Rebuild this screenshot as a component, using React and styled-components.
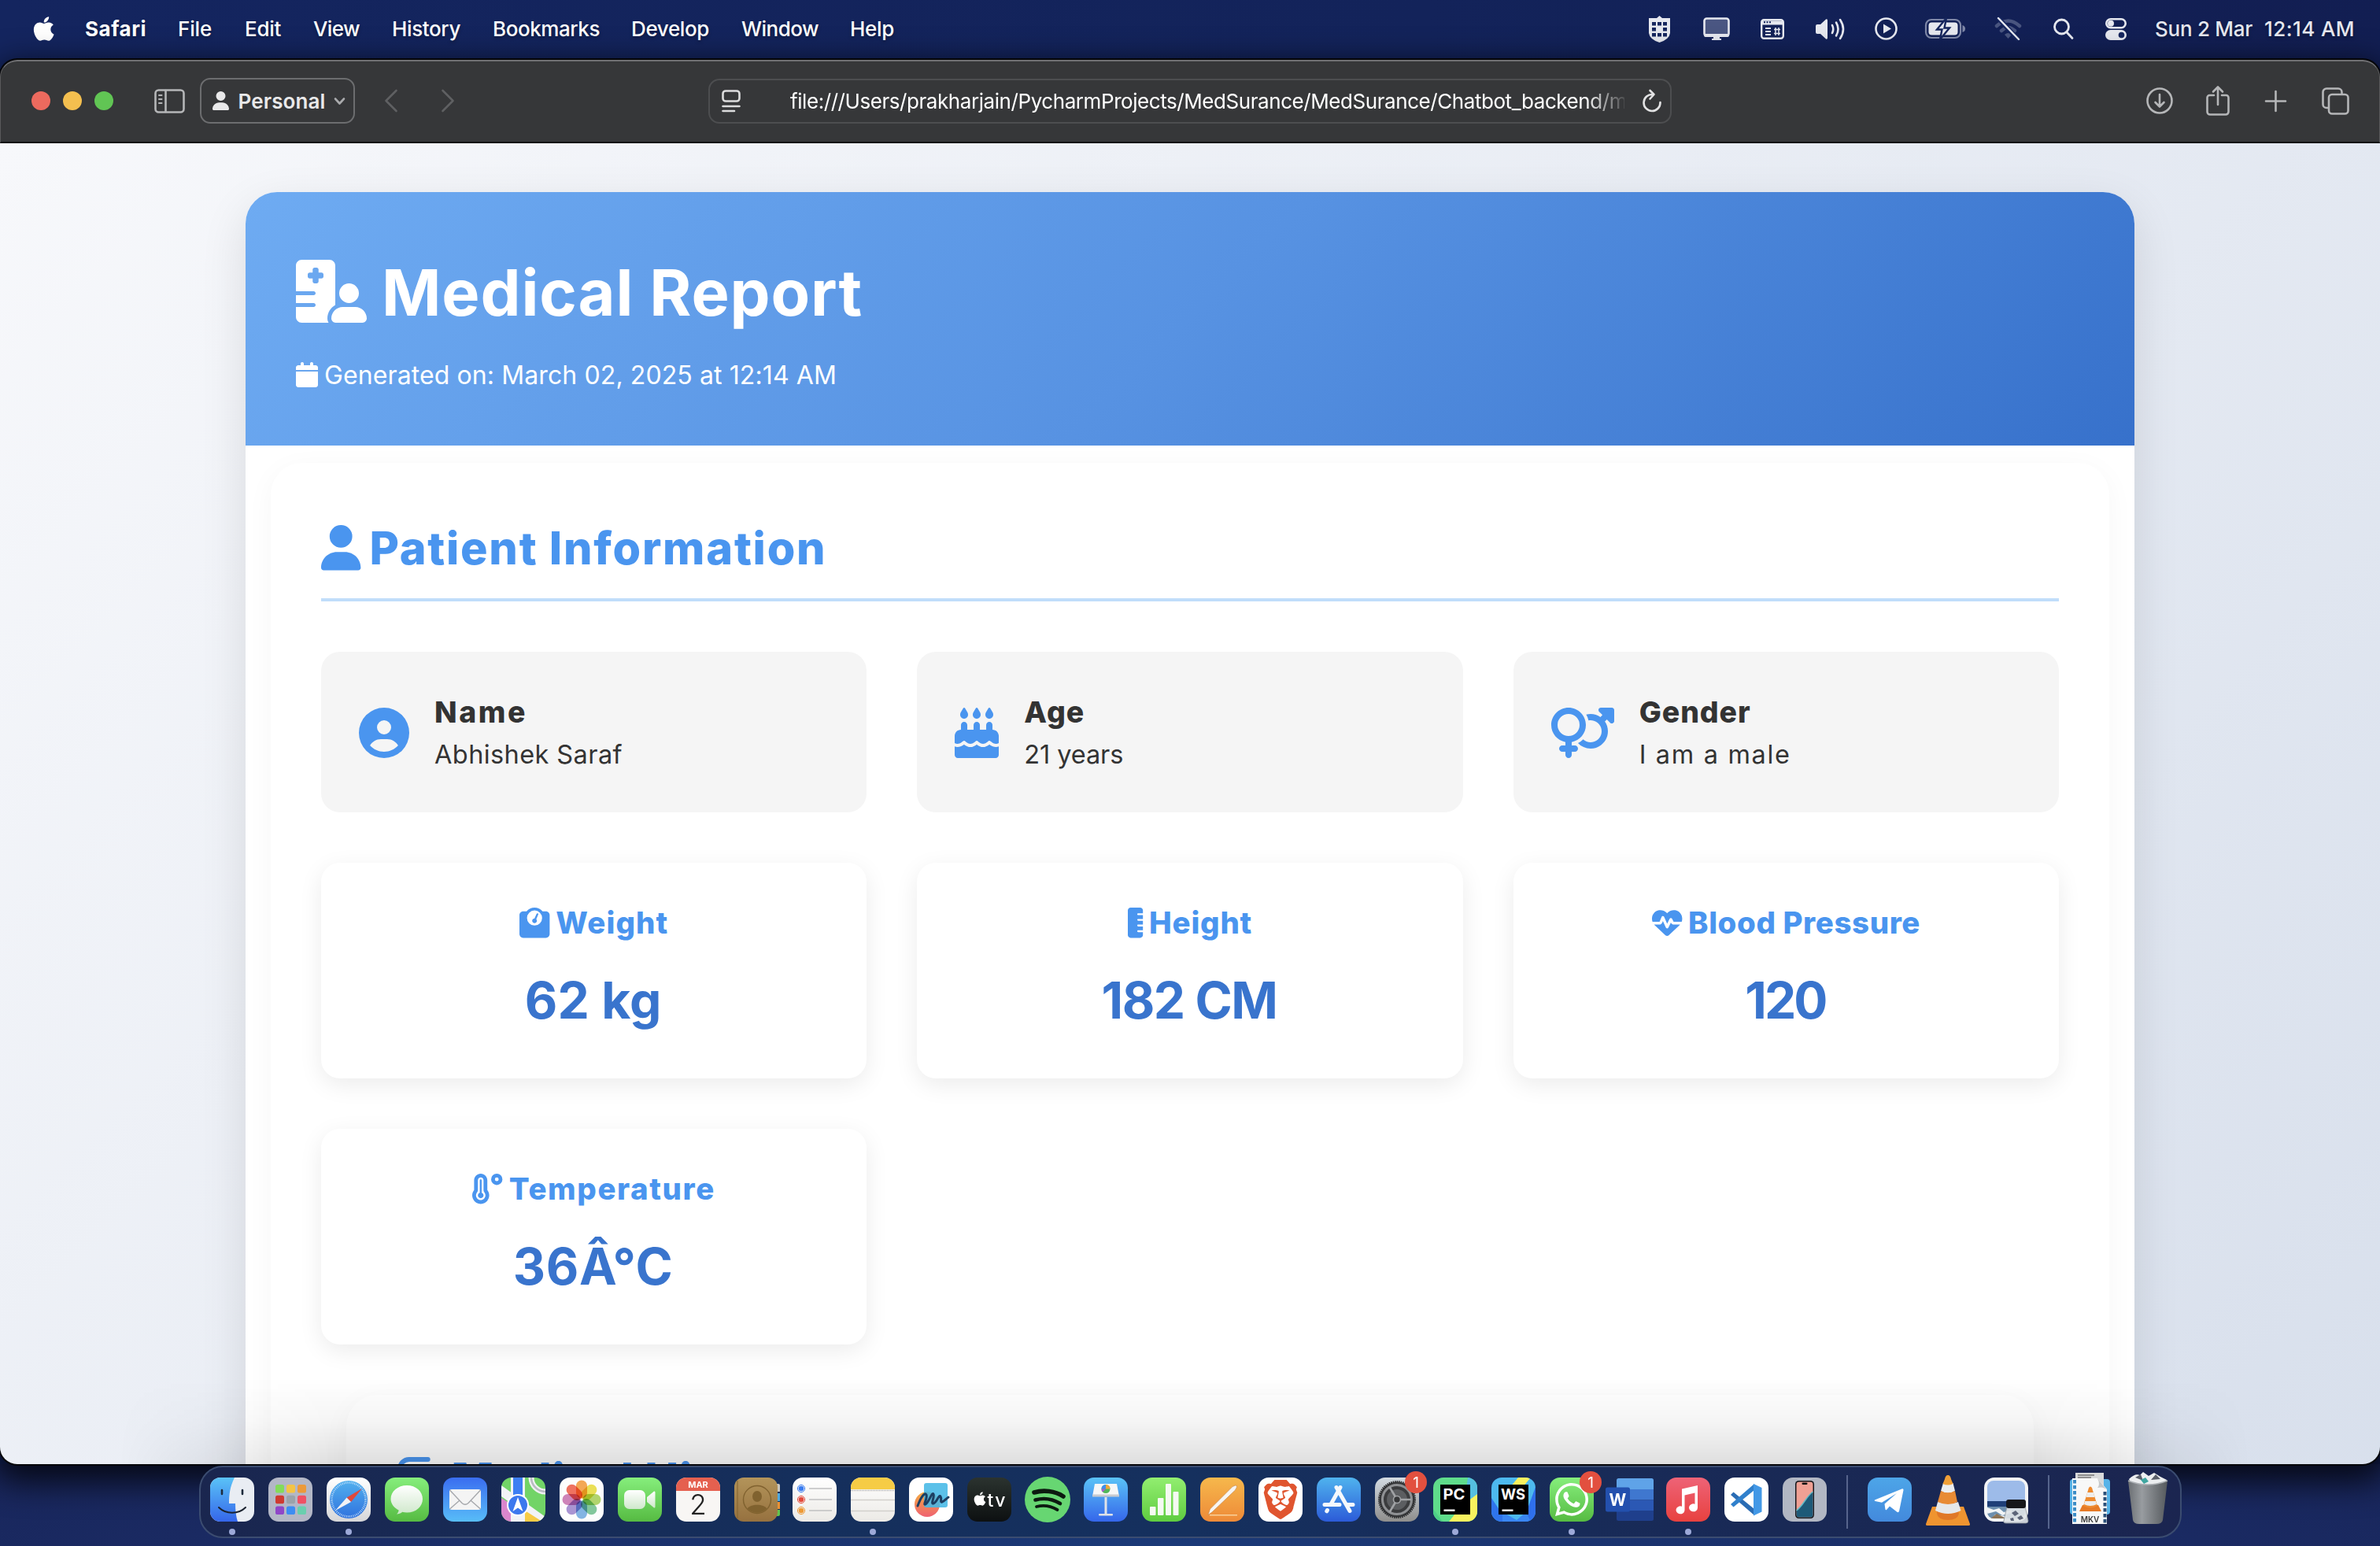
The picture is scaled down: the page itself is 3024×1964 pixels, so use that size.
import React, { useLayoutEffect, useRef, useState } from "react";
import styled, { createGlobalStyle } from "styled-components";
import {
  FaApple, FaHospitalUser, FaCalendar, FaUser, FaCircleUser, FaCakeCandles, FaVenusMars,
  FaWeightScale, FaRulerVertical, FaHeartPulse, FaTemperatureHigh, FaWhatsapp,
} from "react-icons/fa6";
import { SiBrave } from "react-icons/si";

const Global = createGlobalStyle`
  * { box-sizing: border-box; }
  html, body { margin: 0; padding: 0; overflow: hidden; background: #14245c; }
  body { font-family: Inter, "Liberation Sans", sans-serif; }
  svg { display: block; flex: none; overflow: visible; }
`;

/* ---------- text with tracking adjusted to a given measure ---------- */
const TrackedSpan = styled.span`
  display: inline-block;
  white-space: pre;
  flex: none;
`;
function Tracked({ width, children }) {
  const ref = useRef(null);
  const [spacing, setSpacing] = useState(0);
  useLayoutEffect(() => {
    const natural = ref.current.getBoundingClientRect().width;
    setSpacing((width - natural) / children.length);
  }, []);
  return <TrackedSpan ref={ref} style={{ letterSpacing: `${spacing}px` }}>{children}</TrackedSpan>;
}

/* ---------- desktop ---------- */
const Desktop = styled.div`
  width: 3024px;
  height: 1964px;
  display: flex;
  flex-direction: column;
  overflow: hidden;
  background: linear-gradient(90deg, #14255f, #13235a 60%, #121e52);
`;
const MenuBar = styled.header`
  height: 76px;
  flex: none;
  display: flex;
  justify-content: space-between;
  padding: 0 32px 3px 41px;
  color: #fff;
  font-size: 26px;
  font-weight: 500;
  text-shadow: 0 2px 4px rgba(0, 0, 0, 0.35);
`;
const MenuList = styled.nav`
  display: flex;
  align-items: center;
`;
const MenuItem = styled.div`
  width: ${(p) => p.$slot}px;
  font-weight: ${(p) => (p.$strong ? 700 : 500)};
`;
const StatusList = styled.div`
  display: flex;
  align-items: center;
  color: #e6e8ef;
`;
const StatusIcon = styled.svg`
  width: ${(p) => p.$w}px;
  height: ${(p) => p.$h}px;
  margin-right: ${(p) => p.$gap}px;
`;
const Clock = styled.div`
  display: flex;
  gap: 15px;
`;

/* ---------- browser window ---------- */
const Window = styled.main`
  height: 1784px;
  flex: none;
  display: flex;
  flex-direction: column;
  border-radius: 22px;
  overflow: hidden;
  background: #363739;
  box-shadow: 0 0 0 2px #05060a, 0 14px 40px 8px rgba(0, 0, 0, 0.75);
  position: relative;
  z-index: 1;
`;
const Toolbar = styled.div`
  height: 106px;
  flex: none;
  display: flex;
  align-items: center;
  padding: 0 38px 2px 39px;
  border-top: 2px solid #707073;
  border-bottom: 2px solid #0c0c0d;
  border-left: 1px solid #59595b;
  border-right: 1px solid #59595b;
  border-radius: 22px 22px 0 0;
  color: #b5b6b8;
`;
const Lights = styled.div`
  display: flex;
  gap: 16px;
  margin-right: 52px;
`;
const Light = styled.i`
  width: 24px;
  height: 24px;
  border-radius: 50%;
  background: ${(p) => p.$tone};
`;
const ToolIcon = styled.svg`
  width: ${(p) => p.$w}px;
  height: ${(p) => p.$h}px;
  margin-right: ${(p) => p.$gap || 0}px;
  fill: none;
  stroke: ${(p) => p.$tone || "currentColor"};
  stroke-width: 2.6;
  stroke-linecap: round;
  stroke-linejoin: round;
`;
const ProfileButton = styled.button`
  width: 197px;
  height: 58px;
  margin-right: 38px;
  padding: 0 11px 0 14px;
  display: flex;
  align-items: center;
  justify-content: space-between;
  border: 2px solid #6c6d6f;
  border-radius: 13px;
  background: transparent;
  color: #e9e9ea;
  font: 600 26px Inter, sans-serif;
`;
const AddressBar = styled.div`
  width: 1224px;
  height: 57px;
  margin-left: 323px;
  padding: 0 10px 0 15px;
  display: flex;
  align-items: center;
  border: 2px solid #4d4e50;
  border-radius: 14px;
  color: #fff;
`;
const Address = styled.div`
  width: 1060px;
  margin: 0 23px 0 63px;
  overflow: hidden;
  font-size: 26px;
  white-space: nowrap;
  mask-image: linear-gradient(90deg, #000 1010px, transparent 1066px);
`;
const ToolGroup = styled.div`
  display: flex;
  align-items: center;
  margin-left: auto;
`;

/* ---------- report page ---------- */
const Page = styled.div`
  flex: 1;
  min-height: 0;
  padding: 62px 312px 0;
  overflow: hidden;
  background: linear-gradient(135deg, #f7f8fb, #c3cfe2) 0 0 / 3024px 4900px no-repeat;
`;
const Report = styled.article`
  height: 2600px;
  border-radius: 40px;
  background: #fff;
  box-shadow: 0 20px 60px rgba(0, 0, 0, 0.11);
`;
const ReportHeader = styled.header`
  height: 322px;
  padding: 64px 64px 0;
  border-radius: 40px 40px 0 0;
  background: linear-gradient(135deg, #6eabf2, #5792e2 50%, #3771cb);
  color: #fff;
`;
const Title = styled.h1`
  height: 124px;
  margin: 0 0 20px;
  display: flex;
  align-items: center;
  gap: 19px;
  font-size: 81px;
  font-weight: 700;
`;
const TitleText = styled.span`
  padding-top: 3px;
`;
const Generated = styled.p`
  height: 48px;
  margin: 0;
  display: flex;
  align-items: center;
  gap: 8px;
  font-size: 32px;
`;
const Glyph = styled.span`
  flex: none;
  display: block;
  height: 1em;
  width: ${(p) => p.$ratio}em;
  font-size: ${(p) => (p.$size ? `${p.$size}px` : "inherit")};
  color: ${(p) => p.$tone || "inherit"};
  svg { width: 100%; height: 100%; }
`;
const Section = styled.section`
  height: 2200px;
  margin: ${(p) => p.$top}px 32px 0;
  padding: 64px;
  border-radius: 40px;
  background: #fff;
  box-shadow: 0 8px 36px rgba(0, 0, 0, 0.04);
`;
const SectionTitle = styled.h2`
  height: 112px;
  margin: 0 0 64px;
  padding-bottom: 20px;
  display: flex;
  align-items: center;
  gap: ${(p) => p.$gap}px;
  border-bottom: 4px solid #c0ddfa;
  color: #4a95ef;
  font-size: 57.6px;
  font-weight: 800;
`;
const SectionName = styled.span`
  padding-bottom: ${(p) => p.$lift || 0}px;
`;
const CardGrid = styled.div`
  display: grid;
  grid-template-columns: repeat(3, 1fr);
  gap: 64px;
`;
const InfoCard = styled.div`
  height: 204px;
  padding: 1px 48px 0;
  display: flex;
  align-items: center;
  gap: 32px;
  border-radius: 24px;
  background: #f5f5f5;
  color: #333;
`;
const InfoLabel = styled.h3`
  margin: 0;
  font-size: 37.4px;
  font-weight: 800;
  line-height: 56px;
`;
const InfoValue = styled.p`
  margin: 0;
  font-size: 32.5px;
  line-height: 52px;
`;
const StatCard = styled.div`
  height: 274px;
  padding-top: 48px;
  border-radius: 24px;
  background: #fff;
  box-shadow: 0 8px 30px rgba(0, 0, 0, 0.08);
`;
const StatLabel = styled.h3`
  height: 56px;
  margin: 0 0 23px;
  display: flex;
  align-items: center;
  justify-content: center;
  gap: 8px;
  color: #4a95ef;
  font-size: 38.4px;
  font-weight: 800;
`;
const StatValue = styled.p`
  margin: 0;
  padding-right: 2px;
  text-align: center;
  color: #3974cd;
  font-size: 64px;
  font-weight: 650;
  line-height: 96px;
`;
const BottomShade = styled.div`
  position: absolute;
  left: 0;
  right: 0;
  bottom: 0;
  height: 110px;
  background: linear-gradient(rgba(0, 0, 0, 0), rgba(0, 0, 0, 0.04) 50%, rgba(0, 0, 0, 0.125));
  mask-image: linear-gradient(90deg, transparent 150px, #000 420px, #000 2600px, transparent 2860px);
`;

/* ---------- dock ---------- */
const DockArea = styled.footer`
  flex: 1;
  display: flex;
  justify-content: center;
  align-items: flex-start;
  background: radial-gradient(ellipse at 50% 100%, #1b3a78, #1a2a62 60%, #182458);
`;
const DockBar = styled.div`
  height: 92px;
  margin-top: 2px;
  padding: 0 11px 0 12px;
  display: flex;
  align-items: flex-start;
  gap: 18px;
  border: 2px solid #3b4c70;
  border-radius: 30px;
  background: linear-gradient(90deg, #1a264f, #152f5c 30%, #15305e 50%, #182b58 70%, #1b2550);
  position: relative;
  z-index: 2;
`;
const DockItem = styled.div`
  width: 56px;
  padding-top: 13px;
  display: flex;
  flex-direction: column;
  align-items: center;
  gap: 9px;
  svg { width: 56px; height: 56px; }
`;
const Running = styled.i`
  width: 8px;
  height: 8px;
  border-radius: 50%;
  background: #9da9d8;
`;
const DockDivider = styled.i`
  width: 2px;
  height: 68px;
  margin: 10px 7px 0;
  background: #56648c;
`;

const Tile = ({ fill }) => <rect width="56" height="56" rx="13" fill={fill} />;
const Grad = ({ id, from, to, mid }) => (
  <linearGradient id={id} x1="0" y1="0" x2="0" y2="1">
    <stop offset="0" stopColor={from} />
    {mid && <stop offset="0.5" stopColor={mid} />}
    <stop offset="1" stopColor={to} />
  </linearGradient>
);
const Badge = () => (
  <g>
    <circle cx="52" cy="6" r="14" fill="#e2503f" />
    <text x="52" y="13" fontSize="19" textAnchor="middle" fill="#fff">1</text>
  </g>
);

const art = {
  finder: (
    <>
      <clipPath id="cf"><rect width="56" height="56" rx="13" /></clipPath>
      <g clipPath="url(#cf)">
        <rect width="56" height="56" fill="#e9edf3" />
        <path d="M0 0H31C25 12 24 22 24 33H32C32 42 33 50 35 56H0Z" fill="url(#gBlueDown)" />
      </g>
      <path d="M15 16v5M41 16v5" stroke="#1d2b3d" strokeWidth="2.6" strokeLinecap="round" />
      <path d="M11 38C20 47 36 47 45 38" stroke="#1b2330" strokeWidth="2" fill="none" strokeLinecap="round" />
    </>
  ),
  launchpad: (
    <>
      <Tile fill="#b3b7c6" />
      {["#83dc5a", "#f4c445", "#ec9a3a", "#cf3a30", "#9ba3aa", "#f05164", "#8f46c8", "#3d8df2", "#69cfae"].map((c, i) => (
        <rect key={c} x={9 + (i % 3) * 14} y={9 + Math.floor(i / 3) * 13.8} width="11" height="10.5" rx="2.6" fill={c} />
      ))}
    </>
  ),
  safari: (
    <>
      <Tile fill="url(#gPaper)" />
      <circle cx="28" cy="28" r="24" fill="url(#gSafari)" />
      <circle cx="28" cy="28" r="21.5" fill="none" stroke="#cfe6fb" strokeWidth="2.6" strokeDasharray="0.8 1.45" />
      <path d="M45 14L31 31L25.500 25.500Z" fill="#e0483b" />
      <path d="M11 42L25.500 25.500L31 31Z" fill="#f1f3f5" />
    </>
  ),
  messages: (
    <>
      <Tile fill="url(#gGreen)" />
      <path d="M28 10c11.500 0 20 7.500 20 17.200S39.500 44.500 28 44.500c-2 0-4-.2-5.800-.7-2 1.800-4.600 2.700-7.200 2.700 1.500-1.200 2.500-3 2.600-5C11.500 38.300 7.500 33.300 7.500 27.200 7.500 17.500 16.500 10 28 10Z" fill="url(#gBubble)" />
    </>
  ),
  mail: (
    <>
      <Tile fill="url(#gMail)" />
      <rect x="8" y="15" width="40" height="26" rx="3" fill="#f4f4f4" />
      <path d="M8.500 16L24 32.500q4 3.500 8 0L47.500 16M8.500 40L21 29M47.500 40L35 29" fill="none" stroke="#a4a6aa" strokeWidth="1.300" />
    </>
  ),
  maps: (
    <>
      <clipPath id="cm"><rect width="56" height="56" rx="13" /></clipPath>
      <g clipPath="url(#cm)">
        <rect width="56" height="56" fill="#72d467" />
        <path d="M0 26L14 35V56H0Z" fill="#d986cd" />
        <path d="M0 10L56 50V64L0 24Z" fill="#f2f3f6" />
        <path d="M30 42L52 56H30Z" fill="#f7cb45" />
        <path d="M38 0A18 18 0 0 0 56 18" stroke="#f0f0f2" strokeWidth="7" fill="none" />
        <path d="M38 0A18 18 0 0 0 56 18" stroke="#b8bbc2" strokeWidth="2.500" fill="none" />
        <rect x="12" width="18" height="56" fill="#f2f3f6" />
        <rect x="15" width="12" height="34" fill="#3d7ff3" />
      </g>
      <circle cx="21" cy="35" r="14" fill="#fff" />
      <circle cx="21" cy="35" r="12" fill="#3c78ee" />
      <path d="M21 25L27.500 43L21 38.500L14.500 43Z" fill="#fff" />
    </>
  ),
  photos: (
    <>
      <Tile fill="#fdfdfd" />
      {["#f39a37", "#e9dc3a", "#a6cf55", "#6fbf8c", "#6ea9e0", "#9b82cd", "#c76fae", "#ee5a45"].map((c, i) => (
        <rect key={c} x="21" y="3.500" width="14" height="23" rx="7" fill={c} fillOpacity="0.85" transform={`rotate(${i * 45} 28 28)`} style={{ mixBlendMode: "multiply" }} />
      ))}
    </>
  ),
  facetime: (
    <>
      <Tile fill="url(#gGreen)" />
      <rect x="8" y="16" width="27" height="24" rx="6.500" fill="url(#gBubble)" />
      <path d="M37 25L46 17.500Q47.500 17 47.500 19V37Q47.500 39 46 38.500L37 31Z" fill="url(#gBubble)" />
    </>
  ),
  calendar: (
    <>
      <Tile fill="#f8f6f4" />
      <path d="M13 0H43A13 13 0 0 1 56 13V17H0V13A13 13 0 0 1 13 0Z" fill="#e5604f" />
      <text x="28" y="13" fontSize="11" fontWeight="700" textAnchor="middle" fill="#fff">MAR</text>
      <text x="28" y="47" fontSize="35" fontWeight="300" textAnchor="middle" fill="#222">2</text>
    </>
  ),
  contacts: (
    <>
      <path d="M50 8h6a2 2 0 0 1 2 2v8h-8Z" fill="#c9c6bf" />
      <path d="M50 20h8v10h-8Z" fill="#4fa9df" />
      <path d="M50 31h8v9h-8Z" fill="#ea9133" />
      <path d="M50 41h8v6a2 2 0 0 1-2 2h-6Z" fill="#62c44e" />
      <rect width="55" height="56" rx="12" fill="url(#gBrown)" />
      <path d="M4 4V52" stroke="#82622f" strokeWidth="1" />
      <circle cx="29" cy="28" r="17.500" fill="none" stroke="#80622f" strokeWidth="1.400" />
      <ellipse cx="29" cy="24" rx="6" ry="7" fill="#80622f" />
      <path d="M16.500 39.500C20 33 38 33 41.500 39.500A17.500 17.500 0 0 1 16.500 39.500Z" fill="#80622f" />
    </>
  ),
  reminders: (
    <>
      <Tile fill="url(#gPaperLight)" />
      {["#3b7df0", "#e34b3d", "#ee9a36"].map((c, i) => (
        <g key={c}>
          <circle cx="11" cy={14 + i * 14} r="4.600" fill="none" stroke={c} strokeWidth="1" />
          <circle cx="11" cy={14 + i * 14} r="3.300" fill={c} />
          <path d={`M21 ${14 + i * 14}H50`} stroke="#c3c3c3" strokeWidth="1.600" />
        </g>
      ))}
    </>
  ),
  notes: (
    <>
      <Tile fill="url(#gPaperLight)" />
      <path d="M13 0H43A13 13 0 0 1 56 13V15H0V13A13 13 0 0 1 13 0Z" fill="#f6cc45" />
      <path d="M0 16.500H56" stroke="#aaa7a0" strokeWidth="1.500" strokeDasharray="1 1" />
      <path d="M0 28.500H56M0 42.500H56" stroke="#d2d0cc" strokeWidth="1.300" />
    </>
  ),
  freeform: (
    <>
      <Tile fill="#fff" />
      <circle cx="23" cy="34" r="16" fill="url(#gPeach)" />
      <rect x="19" y="7" width="30" height="31" rx="3" fill="#45b8e6" fillOpacity="0.88" />
      <path d="M11 36C15 25 20 18 22 22S17 36 21 34 29 18 31 21 27 34 31 33 38 21 40 24 39 32 42 31 47 27 50 25" stroke="#1d3f63" strokeWidth="3" fill="none" strokeLinecap="round" />
    </>
  ),
  tv: (
    <>
      <Tile fill="url(#gInk)" />
      <FaApple x="7" y="17" width="18" height="20" style={{ width: 18, height: 20 }} color="#fff" />
      <text x="25.500" y="37" fontSize="23" fontWeight="500" fill="#fff" textLength="23">tv</text>
    </>
  ),
  spotify: (
    <>
      <circle cx="28" cy="28" r="29" fill="#67d672" />
      <g stroke="#0c1a10" fill="none" strokeLinecap="round">
        <path d="M11 19C23 15.500 37 17 48 24" strokeWidth="5.600" />
        <path d="M12.500 28.500C23 25.500 34 27 44 33" strokeWidth="4.600" />
        <path d="M14 37C23 34.500 32 36 40.500 41" strokeWidth="3.800" />
      </g>
    </>
  ),
  keynote: (
    <>
      <Tile fill="url(#gBlueDown)" />
      <path d="M14 8H42L45 24H11Z" fill="#f6f7f8" />
      <path d="M11 21.500H45V24.500H11Z" fill="#c6cad0" />
      <rect x="26.500" y="25" width="3" height="22" fill="#e0e3e8" />
      <rect x="19" y="46" width="18" height="2.600" rx="1" fill="#dfe2e6" />
      <circle cx="28" cy="14.500" r="5.500" fill="#51b85a" />
      <path d="M28 14.500V9A5.500 5.500 0 0 1 33.500 14.500Z" fill="#f0a53a" />
      <path d="M28 14.500H22.500A5.500 5.500 0 0 1 28 9Z" fill="#3e8ff0" />
      <path d="M28 14.500L24 18.500A5.500 5.500 0 0 1 22.500 14.500Z" fill="#a95bd0" />
    </>
  ),
  numbers: (
    <>
      <Tile fill="url(#gLime)" />
      <g fill="#f5faf2">
        <rect x="10" y="37" width="7.500" height="11" rx="1" />
        <rect x="20" y="26" width="7.500" height="22" rx="1" />
        <rect x="30" y="8" width="7" height="40" rx="1" />
        <rect x="39.500" y="18" width="7" height="30" rx="1" />
      </g>
    </>
  ),
  pages: (
    <>
      <Tile fill="url(#gOrange)" />
      <path d="M10 47.500L12.500 40L41 11.500Q45 9 46.500 10.500 47 12 44.500 16L15 44Z" fill="#f7f5f2" stroke="#c98a4b" strokeWidth="0.700" />
      <path d="M12 47.800H47" stroke="#f9d09a" strokeWidth="1.400" />
    </>
  ),
  brave: (
    <>
      <Tile fill="#fff" />
      <SiBrave x="3" y="2" style={{ width: 50, height: 52 }} color="#e0552f" />
    </>
  ),
  appstore: (
    <>
      <Tile fill="url(#gStore)" />
      <g stroke="#f5f8fc" strokeWidth="5" strokeLinecap="round" fill="none">
        <path d="M30 12.500L18 34M13.500 41.500L12.800 42.800M25 12.500L42 42.500M10 34.500H29M38.500 34.500H46" />
      </g>
    </>
  ),
  settings: (
    <>
      <Tile fill="url(#gSteel)" />
      <circle cx="28" cy="28" r="22.500" fill="#3b3c3e" stroke="#2b2c2e" strokeWidth="3" strokeDasharray="1.500 1" />
      <circle cx="28" cy="28" r="18.500" fill="none" stroke="#8f9194" strokeWidth="3" />
      <circle cx="28" cy="28" r="13" fill="#5c5e61" />
      <circle cx="28" cy="28" r="4.500" fill="#37383a" stroke="#a0a2a5" strokeWidth="1.600" />
      <path d="M32 28H46M26 24.500L18.500 12M26 31.500L18.500 44" stroke="#a0a2a5" strokeWidth="2.600" />
      <Badge />
    </>
  ),
  pycharm: (
    <>
      <clipPath id="cp"><rect width="56" height="56" rx="13" /></clipPath>
      <g clipPath="url(#cp)">
        <rect width="56" height="56" fill="#5fdc8b" />
        <path d="M44 0H56V25L40 30Z" fill="#55bfe0" />
        <path d="M56 21L36 36L20 56H56Z" fill="#f8f25e" />
        <path d="M0 40L12 56H0Z" fill="#4dcf87" />
      </g>
      <rect x="9" y="9" width="38" height="38" />
      <text x="12.500" y="28" fontSize="19" fontWeight="700" fill="#fff" textLength="28" lengthAdjust="spacingAndGlyphs">PC</text>
      <rect x="13.500" y="40.500" width="14" height="2.400" fill="#fff" />
    </>
  ),
  webstorm: (
    <>
      <clipPath id="cw"><rect width="56" height="56" rx="13" /></clipPath>
      <g clipPath="url(#cw)">
        <rect width="56" height="56" fill="#4db9ef" />
        <path d="M34 0H50L38 14L24 12Z" fill="#f8f25e" />
        <path d="M56 12L40 56H56Z" fill="#2f6fec" />
        <path d="M0 26L20 56H0Z" fill="#2f74ec" />
        <path d="M14 44L32 54L44 44L50 56H14Z" fill="#3a86f2" />
      </g>
      <rect x="9" y="9" width="38" height="38" />
      <text x="12" y="28" fontSize="19" fontWeight="700" fill="#fff" textLength="31" lengthAdjust="spacingAndGlyphs">WS</text>
      <rect x="13.500" y="40.500" width="14" height="2.400" fill="#fff" />
    </>
  ),
  whatsapp: (
    <>
      <Tile fill="url(#gGreen)" />
      <FaWhatsapp x="4" y="4" style={{ width: 48, height: 48 }} color="#fff" />
      <Badge />
    </>
  ),
  word: (
    <>
      <clipPath id="cwd"><rect x="11" y="1" width="47" height="54" rx="2.500" /></clipPath>
      <g clipPath="url(#cwd)">
        <rect x="11" y="1" width="47" height="14" fill="#5fa3e8" />
        <rect x="11" y="15" width="47" height="13.500" fill="#3f77cf" />
        <rect x="11" y="28.500" width="47" height="13.500" fill="#2b58b4" />
        <rect x="11" y="42" width="47" height="14" fill="#1f3f8c" />
      </g>
      <rect x="-3" y="12.500" width="31" height="31" rx="2.500" fill="#2350ae" />
      <text x="12.500" y="35.500" fontSize="21" fontWeight="700" textAnchor="middle" fill="#fff">W</text>
    </>
  ),
  music: (
    <>
      <Tile fill="url(#gRed)" />
      <path d="M20 14.500L40 10V38.500a5.500 5 0 1 1-3.500-4.800V19.500L23.500 22.500V41.500a5.500 5 0 1 1-3.500-4.800Z" fill="#fff" />
    </>
  ),
  vscode: (
    <>
      <Tile fill="#fff" />
      <path d="M8 22L11.500 18.500L38 40V48Z" fill="#2a6cb4" />
      <path d="M8 34L11.500 37.500L38 16V8Z" fill="#3080cc" />
      <path d="M37 8L47.500 13V43.500L37 48.500Z" fill="#4298e6" />
    </>
  ),
  iphone: (
    <>
      <Tile fill="#b2b7c3" />
      <rect x="16" y="4" width="24" height="48" rx="4.500" fill="#15171c" />
      <rect x="17.500" y="5.500" width="21" height="45" rx="3.400" fill="#f0a094" />
      <path d="M38.500 18C30 24 26 36 17.500 42V47a3.400 3.400 0 0 0 3.400 3.500H35a3.400 3.400 0 0 0 3.500-3.500Z" fill="#1e5a78" />
      <path d="M38.500 18C30 24 26 36 17.500 42" stroke="#63bcc8" strokeWidth="1.500" fill="none" />
      <rect x="24.500" y="6.500" width="7" height="2.600" rx="1.300" fill="#111" />
    </>
  ),
  telegram: (
    <>
      <Tile fill="url(#gTele)" />
      <path d="M9 28.500L44 14.200Q45.800 14 45.500 16L40 43Q39 45 37 43.500L28 36.500L24 41Q22.500 42 22.300 39.500L21.500 33.500L37 20L18 31.800L9.500 30Q8 29.200 9 28.500Z" fill="#fff" />
    </>
  ),
  vlc: (
    <>
      <path d="M8 37H48L56 59Q56.500 61 54.500 61H1.500Q-.5 61 0 59Z" fill="#ef9430" />
      <path d="M14 40L25 0Q28-6 31 0L42 46Q40 54 28 54T14 46Z" fill="#e07828" />
      <path d="M22 7H34.500L37 17Q28 22 19 17Z" fill="#eceef0" />
      <path d="M19 17Q28 22 37 17L40 31Q28 37 15 31Z" fill="#e88b35" />
      <path d="M15 31Q28 37 41 31L44.500 42Q28 50 12 42Z" fill="#e6e8ea" />
      <path d="M24 2Q25-3 28-3T32 2L34.500 8Q28 11 21.500 8Z" fill="#f0a038" />
    </>
  ),
  preview: (
    <>
      <Tile fill="#f4f5f6" />
      <clipPath id="cpv"><rect x="4" y="4" width="48" height="48" rx="8" /></clipPath>
      <g clipPath="url(#cpv)">
        <rect x="4" y="4" width="48" height="27" fill="#9dbbe9" />
        <rect x="4" y="30" width="48" height="7" fill="#1f3f78" />
        <path d="M4 37H52V52H4Z" fill="#6d8fae" />
        <path d="M4 38l8 3 7-2 6 5 10-3v4l-12 3-8-5-11 3ZM14 47l14 2v3H10Z" fill="#f1f4f6" />
        <path d="M8 52l8-6 12 6Z" fill="#8c7356" />
      </g>
      <path d="M29 37H52L56 55Q56 58 53 58H28Q24 58 25 55Z" fill="#dfe3e7" fillOpacity="0.9" stroke="#8d949b" strokeWidth="0.800" />
      <path d="M35 45l5-3 4 4-5 3ZM42 51l5-3 3 4-5 2ZM33 52l4-1 1 4-4 0Z" fill="#5c6478" />
      <rect x="28" y="28" width="25" height="11" rx="3" fill="#16171a" />
    </>
  ),
  mkv: (
    <>
      <rect x="1" y="2" width="51" height="45" rx="4" fill="#56b3e8" />
      <path d="M8-6H44V20H8Z" fill="#d8d9da" />
      <path d="M11-3H32M11 0H28" stroke="#777" strokeWidth="1.500" />
      <path d="M4 1H36L48 15V59H4Z" fill="#f8f8f8" />
      <path d="M36 1Q40 9 36 13Q44 11 48 16Z" fill="#c6c8ca" />
      <path d="M7 3V58" stroke="#3b8cc6" strokeWidth="4" strokeDasharray="4.500 2.500" />
      <path d="M45.500 18V58" stroke="#2a4f78" strokeWidth="4" strokeDasharray="4.500 2.500" />
      <path d="M17 35H37L41 43H13Z" fill="#e67a26" />
      <path d="M25 13Q27 10 29 13L36 36Q27 41 18 36Z" fill="#ee8b30" />
      <path d="M23 19H31L32.500 25H21.500ZM20 30H34L35 34Q27 38 19 34Z" fill="#eee" />
      <text x="26.500" y="56.500" fontSize="10" fontWeight="600" textAnchor="middle" fill="#3a3a3a">MKV</text>
    </>
  ),
  trash: (
    <>
      <path d="M2 2Q10-6 16-3L20-7 27-2 34-6 42-1 50 3 46 11H6Z" fill="#eceef0" />
      <path d="M10 0l7-4 3 8ZM30 3l6-7 6 6Z" fill="#5a5f6a" />
      <path d="M17 3l6-3 4 5-6 3Z" fill="#3fa6a0" />
      <path d="M1 4Q26 14 51 4L45 54Q44 59 37 59H15Q8 59 7 54Z" fill="url(#gTrash)" />
      <path d="M1 4Q26 14 51 4" fill="none" stroke="#aeb2b6" strokeWidth="1.500" />
    </>
  ),
};

const dock = [
  ["finder", 1], ["launchpad"], ["safari", 1], ["messages"], ["mail"], ["maps"], ["photos"], ["facetime"],
  ["calendar"], ["contacts"], ["reminders"], ["notes", 1], ["freeform"], ["tv"], ["spotify"], ["keynote"],
  ["numbers"], ["pages"], ["brave"], ["appstore"], ["settings"], ["pycharm", 1], ["webstorm"], ["whatsapp", 1],
  ["word"], ["music", 1], ["vscode"], ["iphone"], ["|a"], ["telegram"], ["vlc"], ["preview"], ["|b"], ["mkv"], ["trash"],
];

const SharedPaints = () => (
  <svg width="0" height="0" viewBox="0 0 1 1" aria-hidden="true">
    <defs>
      <Grad id="gBlueDown" from="#5ac3f7" to="#3566ea" />
      <Grad id="gPaper" from="#ffffff" to="#d6d6d8" />
      <Grad id="gPaperLight" from="#ffffff" to="#eceae6" />
      <Grad id="gSafari" from="#52b0ee" to="#2f72de" />
      <Grad id="gGreen" from="#86ee7c" to="#56bb42" />
      <Grad id="gBubble" from="#ffffff" to="#cfe8cb" />
      <Grad id="gMail" from="#3a6df0" to="#58bdf8" />
      <Grad id="gBrown" from="#b3945a" to="#96713f" />
      <Grad id="gPeach" from="#f5ac3f" to="#ef6272" />
      <Grad id="gInk" from="#2b332f" to="#0d1011" />
      <Grad id="gLime" from="#92ee70" to="#5fcc40" />
      <Grad id="gOrange" from="#f6b84c" to="#ee8a38" />
      <Grad id="gStore" from="#4fb3ee" to="#2c5bd8" />
      <Grad id="gSteel" from="#d3dbe2" to="#8f8e8c" />
      <Grad id="gRed" from="#ee6377" to="#e8413f" />
      <Grad id="gTele" from="#4da5e8" to="#4389dc" />
      <linearGradient id="gTrash">
        <stop offset="0" stopColor="#6b6f73" />
        <stop offset="0.35" stopColor="#989ca0" />
        <stop offset="1" stopColor="#55595d" />
      </linearGradient>
    </defs>
  </svg>
);

const menus = [
  ["Safari", 118, 78], ["File", 85, 43], ["Edit", 87, 46], ["View", 100, 59], ["History", 128, 87],
  ["Bookmarks", 176, 136], ["Develop", 140, 99], ["Window", 138, 98], ["Help", 60, 56],
];

const info = [
  { label: "Name", lw: 118, value: "Abhishek Saraf", vw: 239, Icon: FaCircleUser, ratio: 1 },
  { label: "Age", lw: 77, value: "21 years", vw: 126, Icon: FaCakeCandles, ratio: 0.875 },
  { label: "Gender", lw: 142, value: "I am a male", vw: 193, Icon: FaVenusMars, ratio: 1.25 },
];
const stats = [
  { label: "Weight", lw: 143, value: "62 kg", vw: 174, Icon: FaWeightScale, ratio: 1 },
  { label: "Height", lw: 131, value: "182 CM", vw: 223, Icon: FaRulerVertical, ratio: 0.5 },
  { label: "Blood Pressure", lw: 295, value: "120", vw: 102, Icon: FaHeartPulse, ratio: 1 },
  { label: "Temperature", lw: 262, value: "36Â°C", vw: 204, Icon: FaTemperatureHigh, ratio: 1 },
];

function StatusIcons() {
  return (
    <>
      <StatusIcon $w={29} $h={34} $gap={41} viewBox="0 0 29 34">
        <path d="M14.500 0L18 3H28V22Q27 30 14.500 34 2 30 1 22V3H11Z" fill="currentColor" />
        <g fill="#16265e">
          {[8, 15, 22].map((y) => [5, 12, 19].map((x) => (x === 12 && y === 15 ? null : <rect key={`${x}-${y}`} x={x} y={y} width="5" height="4.500" />)))}
        </g>
      </StatusIcon>
      <StatusIcon $w={34} $h={29} $gap={39} viewBox="0 0 34 29">
        <rect x="1.500" y="1.500" width="31" height="22" rx="3" fill="#4a5682" stroke="currentColor" strokeWidth="2.600" />
        <path d="M1 21H33V23a2 2 0 0 1-2 2H3a2 2 0 0 1-2-2ZM13 24H21V27H23V29H11V27H13Z" fill="currentColor" />
      </StatusIcon>
      <StatusIcon $w={30} $h={26} $gap={39} viewBox="0 0 30 26" fill="none" stroke="currentColor" strokeWidth="2.400">
        <rect x="1.200" y="1.200" width="27.600" height="23.600" rx="3" />
        <path d="M1 5H29" strokeWidth="5" />
        <path d="M4 4.200H13" stroke="#16265e" strokeDasharray="2 1.500" strokeWidth="2" />
        <path d="M6 12H13M6 16H13M6 20H13" strokeWidth="2" />
        <path d="M17 13.500H25M17 18.500H25M19 11V21M23 11V21" strokeWidth="1.500" />
      </StatusIcon>
      <StatusIcon $w={39} $h={28} $gap={37} viewBox="0 0 39 28" fill="none" stroke="currentColor" strokeWidth="2.600" strokeLinecap="round">
        <path d="M1 10a2 2 0 0 1 2-2H7L14 1.500Q16 .5 16 3V25Q16 27.500 14 26.500L7 20H3a2 2 0 0 1-2-2Z" fill="currentColor" stroke="none" />
        <path d="M22 9Q24.500 14 22 19M27 5.500Q32 14 27 22.500M32 2Q40 14 32 26" />
      </StatusIcon>
      <StatusIcon $w={29} $h={29} $gap={35} viewBox="0 0 29 29">
        <circle cx="14.500" cy="14.500" r="13" fill="none" stroke="currentColor" strokeWidth="2.600" />
        <path d="M11 8.500L21 14.500L11 20.500Z" fill="currentColor" />
      </StatusIcon>
      <StatusIcon $w={51} $h={25} $gap={37} viewBox="0 0 51 25">
        <rect x="1" y="1" width="44" height="23" rx="7" fill="none" stroke="#7f88a8" strokeWidth="2.200" />
        <path d="M47.500 8Q51 9 51 12.500T47.500 17Z" fill="#7f88a8" />
        <rect x="4.500" y="4.500" width="37" height="16" rx="4" fill="currentColor" />
        <path d="M27-1L15 13.500H21.500L19 26L31 11.500H24.500Z" fill="currentColor" stroke="#16265e" strokeWidth="2.400" />
      </StatusIcon>
      <StatusIcon $w={35} $h={29} $gap={40} viewBox="0 0 35 29" fill="none" strokeLinecap="round">
        <path d="M3 11Q17.500-2 32 11M9 17Q17.500 9 26 17" stroke="#49557f" strokeWidth="4.500" />
        <path d="M17.500 27L13 22Q17.500 18 22 22Z" fill="#49557f" />
        <path d="M6 2L29 27" stroke="#16265e" strokeWidth="6" />
        <path d="M5 1L31 28" stroke="currentColor" strokeWidth="2.400" />
      </StatusIcon>
      <StatusIcon $w={25} $h={27} $gap={41} viewBox="0 0 25 27" fill="none" stroke="currentColor" strokeWidth="2.800" strokeLinecap="round">
        <circle cx="10.500" cy="11" r="9" />
        <path d="M17 18L24 25.500" />
      </StatusIcon>
      <StatusIcon $w={27} $h={28} $gap={36} viewBox="0 0 27 28">
        <rect x="1.300" y="1.300" width="24.400" height="11" rx="5.500" fill="none" stroke="currentColor" strokeWidth="2.600" />
        <circle cx="7" cy="6.800" r="4" fill="currentColor" />
        <rect y="15" width="27" height="13" rx="6.500" fill="currentColor" />
        <circle cx="20.500" cy="21.500" r="3.800" fill="#16265e" />
      </StatusIcon>
    </>
  );
}

export default function App() {
  return (
    <Desktop>
      <Global />
      <SharedPaints />
      <MenuBar>
        <MenuList>
          <MenuItem $slot={67}><Glyph $ratio={0.84} $size={35}><FaApple /></Glyph></MenuItem>
          {menus.map(([name, slot, w]) => (
            <MenuItem key={name} $slot={slot} $strong={name === "Safari"}><Tracked width={w}>{name}</Tracked></MenuItem>
          ))}
        </MenuList>
        <StatusList>
          <StatusIcons />
          <Clock>
            <Tracked width={124}>Sun 2 Mar</Tracked>
            <Tracked width={115}>12:14 AM</Tracked>
          </Clock>
        </StatusList>
      </MenuBar>

      <Window>
        <Toolbar>
          <Lights>
            <Light $tone="#ec6a5e" /><Light $tone="#f4bf4f" /><Light $tone="#61c554" />
          </Lights>
          <ToolIcon $w={39} $h={31} $gap={19} viewBox="0 0 39 31">
            <rect x="1.500" y="1.500" width="36" height="28" rx="4" />
            <path d="M14.500 2V29" />
            <path d="M6 8H9.500M6 13H9.500M6 18H9.500" strokeWidth="2" />
          </ToolIcon>
          <ProfileButton>
            <Glyph $ratio={0.875} $size={24}><FaUser /></Glyph>
            <Tracked width={111}>Personal</Tracked>
            <ToolIcon $w={13} $h={9} viewBox="0 0 13 9" $tone="#a9aaac"><path d="M1 1.500L6.500 7.500L12 1.500" /></ToolIcon>
          </ProfileButton>
          <ToolIcon $w={16} $h={28} $gap={56} viewBox="0 0 16 28" $tone="#5f6062"><path d="M14.500 1L1.500 14L14.500 27" /></ToolIcon>
          <ToolIcon $w={16} $h={28} viewBox="0 0 16 28" $tone="#5f6062"><path d="M1.500 1L14.500 14L1.500 27" /></ToolIcon>
          <AddressBar>
            <ToolIcon $w={24} $h={29} viewBox="0 0 24 29" $tone="#dcdcdd">
              <rect x="1.500" y="1.500" width="21" height="13" rx="3.500" />
              <path d="M1.500 21H22.500M1.500 27H16" />
            </ToolIcon>
            <Address>
              <Tracked width={1063}>file:///Users/prakharjain/PycharmProjects/MedSurance/MedSurance/Chatbot_backend/m</Tracked>
            </Address>
            <ToolIcon $w={24} $h={28} viewBox="0 0 24 28" $tone="#e2e2e3">
              <path d="M13 6A10.500 10.500 0 1 0 22.500 16M9.500 1L14.500 6L9.500 11.500" />
            </ToolIcon>
          </AddressBar>
          <ToolGroup>
            <ToolIcon $w={34} $h={34} $gap={42} viewBox="0 0 34 34">
              <circle cx="17" cy="17" r="15.500" /><path d="M17 9V24M11.500 19L17 24.500L22.500 19" />
            </ToolIcon>
            <ToolIcon $w={30} $h={38} $gap={45} viewBox="0 0 30 38">
              <path d="M10 12H4.500A3 3 0 0 0 1.500 15V33A3.500 3.500 0 0 0 5 36.500H25A3.500 3.500 0 0 0 28.500 33V15A3 3 0 0 0 25.500 12H20M15 24V2M9 7.500L15 1.500L21 7.500" />
            </ToolIcon>
            <ToolIcon $w={27} $h={27} $gap={45} viewBox="0 0 27 27"><path d="M13.500 1V26M1 13.500H26" /></ToolIcon>
            <ToolIcon $w={35} $h={35} viewBox="0 0 35 35">
              <rect x="9" y="9" width="24.500" height="24.500" rx="4" />
              <path d="M8.500 26H6A4.500 4.500 0 0 1 1.500 21.500V6A4.500 4.500 0 0 1 6 1.500H21A4.500 4.500 0 0 1 25.500 6V8.500" />
            </ToolIcon>
          </ToolGroup>
        </Toolbar>

        <Page>
          <Report>
            <ReportHeader>
              <Title>
                <Glyph $ratio={1.125} $size={80}><FaHospitalUser /></Glyph>
                <TitleText><Tracked width={611}>Medical Report</Tracked></TitleText>
              </Title>
              <Generated>
                <Glyph $ratio={0.875}><FaCalendar /></Glyph>
                <Tracked width={651}>Generated on: March 02, 2025 at 12:14 AM</Tracked>
              </Generated>
            </ReportHeader>
            <Section $top={22}>
              <SectionTitle $gap={11}>
                <Glyph $ratio={0.875}><FaUser /></Glyph>
                <SectionName><Tracked width={581}>Patient Information</Tracked></SectionName>
              </SectionTitle>
              <CardGrid>
                {info.map(({ label, lw, value, vw, Icon, ratio }) => (
                  <InfoCard key={label}>
                    <Glyph $ratio={ratio} $size={64} $tone="#4a95ef"><Icon /></Glyph>
                    <div>
                      <InfoLabel><Tracked width={lw}>{label}</Tracked></InfoLabel>
                      <InfoValue><Tracked width={vw}>{value}</Tracked></InfoValue>
                    </div>
                  </InfoCard>
                ))}
                {stats.map(({ label, lw, value, vw, Icon, ratio }) => (
                  <StatCard key={label}>
                    <StatLabel>
                      <Glyph $ratio={ratio}><Icon /></Glyph>
                      <Tracked width={lw}>{label}</Tracked>
                    </StatLabel>
                    <StatValue><Tracked width={vw}>{value}</Tracked></StatValue>
                  </StatCard>
                ))}
              </CardGrid>
              <Section $top={64}>
                <SectionTitle $gap={12}>
                  <Glyph $ratio={1}>
                    <svg viewBox="0 0 58 58" fill="none" stroke="currentColor" strokeWidth="6" strokeLinecap="round">
                      <path d="M40 3H16A12 12 0 0 0 4 15V43A12 12 0 0 0 16 55H40" />
                    </svg>
                  </Glyph>
                  <SectionName $lift={2}><Tracked width={461}>Medical History</Tracked></SectionName>
                </SectionTitle>
              </Section>
            </Section>
          </Report>
        </Page>
        <BottomShade />
      </Window>

      <DockArea>
        <DockBar>
          {dock.map(([name, running]) =>
            name[0] === "|" ? (
              <DockDivider key={name} />
            ) : (
              <DockItem key={name}>
                <svg viewBox="0 0 56 56">{art[name]}</svg>
                {running && <Running />}
              </DockItem>
            )
          )}
        </DockBar>
      </DockArea>
    </Desktop>
  );
}
